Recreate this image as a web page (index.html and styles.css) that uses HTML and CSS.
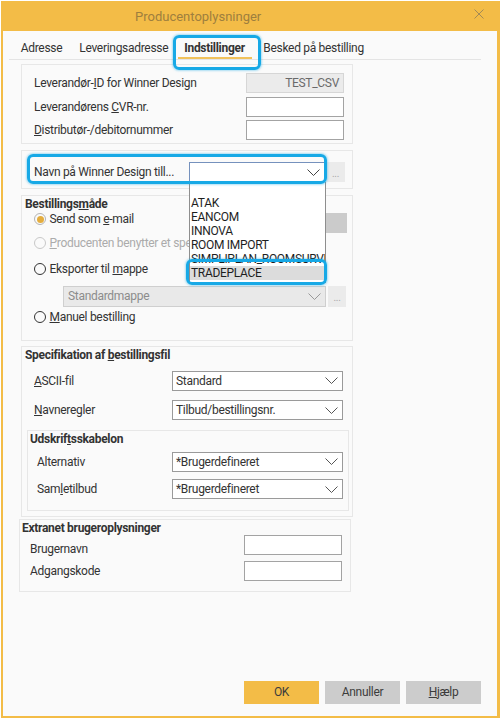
FILE: index.html
```html
<!DOCTYPE html>
<html lang="da">
<head>
<meta charset="utf-8">
<title>Producentoplysninger</title>
<link rel="stylesheet" href="styles.css">
</head>
<body>
<div class="window">
  <div class="titlebar">
    <span class="title">Producentoplysninger</span>
    <svg class="close" width="10" height="10" viewBox="0 0 10 10"><path d="M0.5 0.5 L9.5 9.5 M9.5 0.5 L0.5 9.5" stroke="#a38a55" stroke-width="1" fill="none"/></svg>
  </div>
  <div class="content">
    <div class="tabs">
      <span class="tab t1">Adresse</span>
      <span class="tab t2">Leveringsadresse</span>
      <span class="tab active">Indstillinger</span>
      <span class="tab t4">Besked på bestilling</span>
    </div>

    <div class="group g1">
      <div class="frow"><span>Leverandør-<u>I</u>D for Winner Design</span><div class="input ro">TEST_CSV</div></div>
      <div class="frow"><span>Leverandørens <u>C</u>VR-nr.</span><div class="input"></div></div>
      <div class="frow"><span><u>D</u>istributør-/debitornummer</span><div class="input"></div></div>
    </div>

    <div class="group g2">
      <span class="lbl">Navn på Winner Design till...</span>
      <div class="select sel-open"><span></span><svg class="chev" width="13" height="7" viewBox="0 0 13 7"><path d="M0.5 0.5 L6.5 6.5 L12.5 0.5" fill="none" stroke="#444"/></svg></div>
      <div class="dots">...</div>
    </div>

    <div class="group g3">
      <div class="gtitle">Bestillings<u>m</u>åde</div>
      <div class="rrow r1"><span class="radio on"></span><span>Send som <u>e</u>-mail</span><div class="mailbox"></div></div>
      <div class="rrow r2"><span class="radio dis"></span><span class="dis-text"><u>P</u>roducenten benytter et spe</span></div>
      <div class="rrow r3"><span class="radio"></span><span>Eksporter til <u>m</u>appe</span></div>
      <div class="mrow">
        <div class="select disabled"><span>Standardmappe</span><svg class="chev" width="13" height="7" viewBox="0 0 13 7"><path d="M0.5 0.5 L6.5 6.5 L12.5 0.5" fill="none" stroke="#999"/></svg></div>
        <div class="dots dots2">...</div>
      </div>
      <div class="rrow r4"><span class="radio"></span><span><u>M</u>anuel bestilling</span></div>
    </div>

    <div class="group g4">
      <div class="gtitle">Specifikation af <u>b</u>estillingsfil</div>
      <div class="srow s1"><span><u>A</u>SCII-fil</span><div class="select wide"><span>Standard</span><svg class="chev" width="13" height="7" viewBox="0 0 13 7"><path d="M0.5 0.5 L6.5 6.5 L12.5 0.5" fill="none" stroke="#555"/></svg></div></div>
      <div class="srow s2"><span><u>N</u>avneregler</span><div class="select wide"><span>Tilbud/bestillingsnr.</span><svg class="chev" width="13" height="7" viewBox="0 0 13 7"><path d="M0.5 0.5 L6.5 6.5 L12.5 0.5" fill="none" stroke="#555"/></svg></div></div>
      <div class="group g4i">
        <div class="gtitle">Udskrif<u>t</u>sskabelon</div>
        <div class="srow i1"><span>Alternativ</span><div class="select wide"><span>*Brugerdefineret</span><svg class="chev" width="13" height="7" viewBox="0 0 13 7"><path d="M0.5 0.5 L6.5 6.5 L12.5 0.5" fill="none" stroke="#555"/></svg></div></div>
        <div class="srow i2"><span>Sam<u>l</u>etilbud</span><div class="select wide"><span>*Brugerdefineret</span><svg class="chev" width="13" height="7" viewBox="0 0 13 7"><path d="M0.5 0.5 L6.5 6.5 L12.5 0.5" fill="none" stroke="#555"/></svg></div></div>
      </div>
    </div>

    <div class="group g5">
      <div class="gtitle">Extranet brugeroplysninger</div>
      <div class="erow e1"><span>Brugernavn</span><div class="input"></div></div>
      <div class="erow e2"><span>Adgangskode</span><div class="input"></div></div>
    </div>

    <div class="buttons">
      <div class="btn ok">OK</div>
      <div class="btn">Annuller</div>
      <div class="btn"><u>H</u>jælp</div>
    </div>
  </div>
</div>

<div class="dropdown">
  <div class="opt"></div>
  <div class="opt">ATAK</div>
  <div class="opt">EANCOM</div>
  <div class="opt">INNOVA</div>
  <div class="opt">ROOM IMPORT</div>
  <div class="opt">SIMPLIPLAN_ROOMSURVEY</div>
  <div class="opt sel">TRADEPLACE</div>
</div>

<div class="hl hl-tab"></div>
<div class="hl hl-navn"></div>
<div class="hl hl-trade"></div>
</body>
</html>
```

FILE: styles.css
```css
body {
  margin: 0;
  background: #ffffff;
  font-family: Roboto, "Liberation Sans", sans-serif;
  font-size: 12px;
  letter-spacing: -0.3px;
  color: #333333;
}

u { text-underline-offset: 1px; }

.window {
  position: relative;
  margin: 1px 0 0 1px;
  width: 499px;
  height: 717px;
  box-sizing: border-box;
  background: #f3bc47;
  padding: 0 3px 2px 2px;
  display: flex;
  flex-direction: column;
}

.titlebar {
  height: 30px;
  flex: none;
  margin: 0 -3px 0 -2px;
  display: flex;
  align-items: center;
}

.title {
  margin-left: 134px;
  font-size: 13px;
  letter-spacing: 0;
  color: #9e7f3e;
}

.close {
  margin-left: auto;
  margin-right: 16px;
  align-self: flex-start;
  margin-top: 8px;
}

.content {
  flex: 1;
  background: #fafafa;
  display: flex;
  flex-direction: column;
}

.tabs {
  flex: none;
  height: 28px;
  margin: 0 16px 0 6px;
  padding-left: 11.7px;
  border-bottom: 1px solid #e4e4e4;
  display: flex;
}

.tab {
  box-sizing: border-box;
  padding: 9px 0 1px;
  line-height: 16px;
  border-bottom: 2px solid transparent;
  white-space: nowrap;
  flex: none;
}

.t1 { width: 58.6px; }
.t2 { width: 98.4px; }

.tab.active {
  font-weight: 700;
  width: 74px;
  padding-left: 6.6px;
  margin-right: 11.6px;
  border-bottom-color: #f1c25c;
}

.group {
  box-sizing: border-box;
  border: 1px solid #e7e7e7;
  flex: none;
}

.g1 {
  margin: 4px 0 0 18px;
  width: 332px;
  height: 80px;
  padding: 8px 8px 0 12px;
  display: flex;
  flex-direction: column;
  gap: 3.5px;
}

.frow {
  display: flex;
  align-items: center;
  justify-content: space-between;
  height: 20px;
}

.input {
  box-sizing: border-box;
  width: 98px;
  height: 20px;
  border: 1px solid #a3a3a3;
  background: #ffffff;
  flex: none;
}

.input.ro {
  background: #ebebeb;
  border-color: #d6d6d6;
  color: #6a6a6a;
  text-align: right;
  padding-right: 4px;
  line-height: 18px;
}

.g2 {
  margin: 6px 0 0 18px;
  width: 332px;
  height: 39px;
  padding: 11px 0 0 12px;
  display: flex;
  align-items: flex-start;
}

.g2 .lbl {
  width: 155px;
  line-height: 20px;
  flex: none;
}

.select {
  box-sizing: border-box;
  height: 20px;
  border: 1px solid #9a9a9a;
  background: #ffffff;
  display: flex;
  align-items: center;
  justify-content: space-between;
  padding: 0 4px 0 3px;
  flex: none;
  white-space: nowrap;
}

.sel-open {
  width: 136px;
  border-color: #7591bd;
}

.dots {
  width: 19px;
  height: 20px;
  margin-left: 1px;
  background: #ebebeb;
  color: #a8a8a8;
  font-size: 10px;
  text-align: center;
  line-height: 24px;
  flex: none;
}

.g3 {
  margin: 6px 0 0 18px;
  width: 332px;
  height: 146px;
  padding: 0 5px 0 3px;
  display: flex;
  flex-direction: column;
}

.gtitle {
  font-weight: 700;
  line-height: 16px;
  height: 16px;
  flex: none;
}

.rrow {
  display: flex;
  align-items: center;
  height: 14px;
  padding-left: 9px;
  flex: none;
}

.radio {
  width: 12px;
  height: 12px;
  box-sizing: border-box;
  border: 1.3px solid #333333;
  border-radius: 50%;
  margin-right: 3.5px;
  flex: none;
  display: flex;
  align-items: center;
  justify-content: center;
}

.radio.on {
  border-color: #b4b4b4;
}

.radio.on::after {
  content: "";
  width: 7px;
  height: 7px;
  border-radius: 50%;
  background: #e4ad3e;
}

.radio.dis { border-color: #c8c8c8; }

.dis-text { color: #ababab; }

.mailbox {
  margin-left: auto;
  align-self: flex-start;
  margin-top: 1px;
  width: 158px;
  height: 20px;
  background: #cbcbcb;
  flex: none;
}

.r2 { margin-top: 10.3px; }
.r3 { margin-top: 11.4px; }
.r4 { margin-top: 3px; }

.mrow {
  display: flex;
  margin-top: 10.3px;
  padding-left: 38px;
  height: 21px;
  flex: none;
}

.select.disabled {
  width: 263px;
  height: 21px;
  background: #e9e9e9;
  border-color: #cfcfcf;
  color: #8c8c8c;
  padding-left: 4px;
}

.dots2 {
  width: 18px;
  height: 21px;
  margin-left: 2px;
}

.g4 {
  margin: 5px 0 0 18px;
  width: 332px;
  height: 171px;
  display: flex;
  flex-direction: column;
}

.g4 > .gtitle { padding-left: 3px; }

.srow {
  display: flex;
  align-items: center;
  justify-content: space-between;
  height: 20px;
  padding: 0 9px 0 12px;
  flex: none;
}

.select.wide { width: 171px; }

.s1 { margin-top: 7.7px; }
.s2 { margin-top: 9.6px; }

.g4i {
  margin: 9.7px 0 0 5px;
  width: 322px;
  height: 81px;
  display: flex;
  flex-direction: column;
}

.g4i > .gtitle { padding-left: 2px; }
.g4i .srow { padding: 0 5px 0 9px; }
.i1 { margin-top: 4.7px; }
.i2 { margin-top: 7.6px; }

.g5 {
  margin: 2px 0 0 16px;
  width: 332px;
  height: 73px;
  display: flex;
  flex-direction: column;
}

.g5 > .gtitle { padding-left: 2px; }

.erow {
  display: flex;
  justify-content: space-between;
  align-items: flex-start;
  height: 20px;
  padding: 0 8px 0 10px;
  flex: none;
}

.erow span { line-height: 16px; }
.e1 { margin-top: -1px; }
.e1 span { margin-top: 6px; }
.e2 { margin-top: 6px; }
.e2 span { margin-top: 2px; }

.buttons {
  margin-top: auto;
  margin-bottom: 12px;
  margin-right: 16px;
  align-self: flex-end;
  display: flex;
  gap: 6px;
}

.btn {
  width: 75px;
  height: 23px;
  line-height: 23px;
  text-align: center;
  background: #cccccc;
  color: #3c3c3c;
}

.btn.ok { background: #f3bc47; }

.dropdown {
  position: absolute;
  left: 189px;
  top: 182px;
  width: 137px;
  box-sizing: border-box;
  border: 1px solid #8e8e8e;
  border-top: none;
  background: #ffffff;
  padding-bottom: 2px;
}

.opt {
  height: 14px;
  line-height: 14px;
  padding-left: 1px;
  white-space: nowrap;
  overflow: hidden;
  color: #1e1e1e;
}

.opt.sel { background: #dcdcdc; }

.hl {
  position: absolute;
  box-sizing: border-box;
  border: 3px solid #17a9e6;
  border-radius: 6px;
  box-shadow: 0 0 2px 1px rgba(23, 169, 230, 0.35);
  pointer-events: none;
}

.hl-tab { left: 173px; top: 35px; width: 88px; height: 35px; }
.hl-navn { left: 27px; top: 154px; width: 300px; height: 30px; }
.hl-trade { left: 186px; top: 259px; width: 141px; height: 26px; }
```
